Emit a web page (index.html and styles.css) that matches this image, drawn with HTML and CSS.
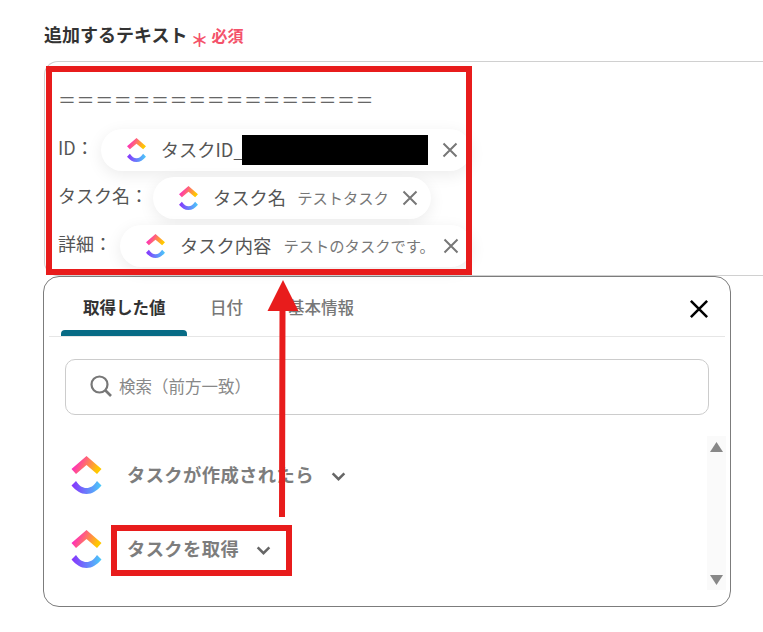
FILE: index.html
```html
<!DOCTYPE html>
<html lang="ja">
<head>
<meta charset="utf-8">
<title>追加するテキスト</title>
<link rel="stylesheet" href="styles.css">
</head>
<body>
<svg class="defs" width="0" height="0" aria-hidden="true">
  <defs>
    <linearGradient id="cuTop" x1="0" y1="0" x2="1" y2="0.3">
      <stop offset="0" stop-color="#ff02f0"/><stop offset="1" stop-color="#ffc800"/>
    </linearGradient>
    <linearGradient id="cuBottom" x1="0" y1="0" x2="1" y2="0">
      <stop offset="0" stop-color="#8930fd"/><stop offset="1" stop-color="#49ccf9"/>
    </linearGradient>
    <symbol id="clickup" viewBox="0 0 30 38">
      <path fill="url(#cuTop)" d="M15 0 30 13 25.500 18 15 9 4.500 18 0 13Z"/>
      <path fill="url(#cuBottom)" d="M0 29.500 4.500 25C8 30 11 32 15 32S22 30 25.500 25L30 29.500C25 35 21 38 15 38S5 35 0 29.500Z"/>
    </symbol>
    <symbol id="close" viewBox="0 0 16 16">
      <path d="M1.500 1.500 14.500 14.500M14.500 1.500 1.500 14.500" fill="none" stroke="currentColor" stroke-width="2"/>
    </symbol>
    <symbol id="chevron" viewBox="0 0 16 10">
      <path d="M1.500 1.500 8 8 14.500 1.500" fill="none" stroke="currentColor" stroke-width="2.800"/>
    </symbol>
  </defs>
</svg>
<div class="page">
  <div class="label-row">
    <span class="label">追加するテキスト</span>
    <span class="asterisk">＊</span>
    <span class="required">必須</span>
  </div>

  <div class="field">
    <div class="equals">＝＝＝＝＝＝＝＝＝＝＝＝＝＝＝＝＝</div>
    <div class="token-row token-row-id">
      <span class="token-label">ID：</span>
      <div class="pill">
        <svg class="pill-logo"><use href="#clickup"/></svg>
        <span class="pill-name">タスクID_</span>
        <span class="redaction"></span>
        <svg class="pill-close"><use href="#close"/></svg>
      </div>
    </div>
    <div class="token-row">
      <span class="token-label">タスク名：</span>
      <div class="pill">
        <svg class="pill-logo"><use href="#clickup"/></svg>
        <span class="pill-name">タスク名</span>
        <span class="pill-value">テストタスク</span>
        <svg class="pill-close"><use href="#close"/></svg>
      </div>
    </div>
    <div class="token-row token-row-detail">
      <span class="token-label">詳細：</span>
      <div class="pill">
        <svg class="pill-logo"><use href="#clickup"/></svg>
        <span class="pill-name">タスク内容</span>
        <span class="pill-value pill-value-long">テストのタスクです。</span>
        <svg class="pill-close"><use href="#close"/></svg>
      </div>
    </div>
  </div>

  <div class="panel">
    <div class="tabs">
      <div class="tab tab-active"><span class="tab-text">取得した値</span><span class="tab-bar"></span></div>
      <div class="tab"><span class="tab-text">日付</span><span class="tab-bar"></span></div>
      <div class="tab"><span class="tab-text">基本情報</span><span class="tab-bar"></span></div>
      <svg class="panel-close"><use href="#close"/></svg>
    </div>
    <div class="search">
      <svg class="search-icon" viewBox="0 0 22 22">
        <circle cx="9.500" cy="9.500" r="8" fill="none" stroke="currentColor" stroke-width="2.200"/>
        <path d="M15.500 15.500 21 21" fill="none" stroke="currentColor" stroke-width="2.600"/>
      </svg>
      <span class="search-text">検索（前方一致）</span>
    </div>
    <div class="results">
      <div class="result-list">
        <div class="result">
          <svg class="result-logo"><use href="#clickup"/></svg>
          <span class="result-name">タスクが作成されたら</span>
          <svg class="result-chevron"><use href="#chevron"/></svg>
        </div>
        <div class="result">
          <svg class="result-logo"><use href="#clickup"/></svg>
          <span class="result-name">タスクを取得</span>
          <svg class="result-chevron"><use href="#chevron"/></svg>
        </div>
      </div>
      <div class="scrollbar">
        <svg class="scroll-arrow" viewBox="0 0 13 10"><path d="M6.500 0 13 10H0Z"/></svg>
        <svg class="scroll-arrow" viewBox="0 0 13 10"><path d="M0 0H13L6.500 10Z"/></svg>
      </div>
    </div>
  </div>

  <div class="highlight highlight-field"></div>
  <div class="highlight highlight-result"></div>
  <svg class="arrow" viewBox="0 0 32 237">
    <path d="M16 0 31.500 31H18.500L18 237H12L12.500 31H0.500Z"/>
  </svg>
</div>
</body>
</html>
```

FILE: styles.css
```css
* { box-sizing: border-box; }

html, body {
  margin: 0;
  padding: 0;
  background: #fff;
}

body {
  font-family: "Noto Sans CJK JP", "Noto Sans", sans-serif;
  color: #555;
}

.defs { position: absolute; }

.page {
  position: relative;
  width: 763px;
  height: 632px;
  overflow: hidden;
  padding-top: 22px;
}

.label-row {
  display: flex;
  align-items: center;
  height: 26px;
  margin-left: 44px;
}

.label {
  padding-bottom: 2px;
  font-size: 18px;
  font-weight: 700;
  color: #333;
}

.asterisk {
  margin-left: 3px;
  width: 18px;
  font-size: 18px;
  line-height: 26px;
  font-weight: 700;
  color: #f4526a;
  padding-top: 8px;
}

.required {
  margin-left: 3px;
  font-size: 16px;
  font-weight: 700;
  color: #f4526a;
}

.field {
  margin: 13px 0 0 44px;
  height: 215px;
  padding: 25px 0 0 13px;
  border: 1px solid #d0d0d0;
  border-right: none;
  border-radius: 14px 0 0 14px;
}

.equals {
  height: 24px;
  margin-bottom: 18px;
  font-size: 18px;
  line-height: 24px;
  letter-spacing: 0.6px;
  color: #666;
  white-space: nowrap;
}

.token-row {
  display: flex;
  align-items: center;
  gap: 5px;
  height: 42px;
  margin-bottom: 6px;
}

.token-row-id { gap: 7px; }
.token-row-detail { gap: 8px; }

.token-label {
  padding-bottom: 6px;
  font-size: 18px;
  color: #555;
  white-space: nowrap;
}

.pill {
  display: flex;
  align-items: center;
  height: 42px;
  padding: 0 13px 0 26px;
  border-radius: 21px;
  background: #fff;
  box-shadow: 0 4px 16px rgba(0, 0, 0, 0.08);
  white-space: nowrap;
}

.pill-logo {
  width: 19px;
  height: 24px;
  margin-right: 15px;
  flex: none;
}

.pill-name {
  padding-bottom: 3px;
  font-size: 18.300px;
  color: #555;
}

.pill-value {
  margin-left: 11px;
  padding-bottom: 3px;
  font-size: 15.300px;
  color: #777;
}

.pill-value-long {
  margin-left: 12px;
  margin-right: -5px;
}

.pill-close {
  width: 16px;
  height: 16px;
  margin-left: 13px;
  color: #777;
  flex: none;
}

.redaction {
  width: 186px;
  height: 30px;
  margin: 0 1px 0 -2px;
  background: #000;
  flex: none;
}

.panel {
  width: 688px;
  height: 331px;
  margin-left: 43px;
  border: 1px solid #7c7c7c;
  border-radius: 16px;
  background: #fff;
}

.tabs {
  display: flex;
  gap: 1px;
  height: 60px;
  margin: 0 5px;
  padding-left: 12px;
  border-bottom: 1px solid #e6e6e6;
}

.tab {
  display: flex;
  flex-direction: column;
  padding: 0 22px;
}

.tab-active { padding-right: 21.500px; }

.tab-text {
  flex: 1;
  padding-top: 18px;
  font-size: 16.500px;
  line-height: 24px;
  font-weight: 500;
  color: #777;
}

.tab-active .tab-text {
  font-weight: 700;
  color: #333;
}

.tab-bar {
  height: 6px;
  margin: 0 -22px;
  border-radius: 4px 4px 0 0;
}

.tab-active .tab-bar {
  margin-right: -21.500px;
  background: #076b85;
}

.panel-close {
  width: 20px;
  height: 20px;
  margin: 22px 16px 0 auto;
  color: #000;
  flex: none;
}

.search {
  display: flex;
  align-items: center;
  gap: 7px;
  height: 56px;
  margin: 22px 21px 0;
  padding-left: 24px;
  border: 1px solid #ccc;
  border-radius: 10px;
}

.search-icon {
  width: 22px;
  height: 22px;
  margin-bottom: 2px;
  color: #777;
  flex: none;
}

.search-text {
  padding-bottom: 2px;
  font-size: 16.500px;
  color: #888;
}

.results {
  display: flex;
  justify-content: space-between;
  margin: 21px 4px 0 27px;
}

.result-list {
  display: flex;
  flex-direction: column;
  gap: 36px;
  padding-top: 20px;
}

.result {
  display: flex;
  align-items: center;
  height: 38px;
}

.result-logo {
  width: 31px;
  height: 38px;
  margin-right: 25px;
  flex: none;
}

.result-name {
  padding-bottom: 2px;
  font-size: 18.300px;
  font-weight: 700;
  letter-spacing: 0.4px;
  color: #7d7d7d;
}

.result-chevron {
  width: 15px;
  height: 9px;
  margin: 3px 0 0 17px;
  color: #666;
  flex: none;
}

.scrollbar {
  display: flex;
  flex-direction: column;
  justify-content: space-between;
  align-items: center;
  width: 19px;
  height: 154px;
  padding: 6px 0 5px;
  background: #fafafa;
}

.scroll-arrow {
  width: 13px;
  height: 10px;
  fill: #888;
}

.highlight {
  position: absolute;
  border: 6px solid #e81c1c;
  pointer-events: none;
}

.highlight-field {
  left: 46px;
  top: 66px;
  width: 426px;
  height: 209px;
}

.highlight-result {
  left: 111px;
  top: 525px;
  width: 181px;
  height: 51px;
}

.arrow {
  position: absolute;
  left: 267px;
  top: 280px;
  width: 32px;
  height: 237px;
  fill: #e81c1c;
}
```
